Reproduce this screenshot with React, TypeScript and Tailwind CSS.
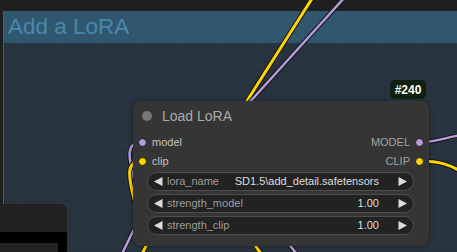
import type { ReactNode } from "react";

const FONT = "font-['Liberation_Sans',Arial,sans-serif]";

function Wire({ d, color, width = 3 }: { d: string; color: string; width?: number }) {
  return (
    <>
      <path d={d} stroke="#151515" strokeWidth={width + 2} fill="none" strokeLinecap="round" />
      <path d={d} stroke={color} strokeWidth={width} fill="none" strokeLinecap="round" />
    </>
  );
}

function Slot({ label, color, side }: { label: string; color: string; side: "in" | "out" }) {
  const dot = (
    <span
      className="block h-[9px] w-[9px] shrink-0 rounded-full border border-[#1a1a1a]"
      style={{ backgroundColor: color }}
    />
  );
  if (side === "in") {
    return (
      <div className="flex items-center">
        <span className="ml-[5px] block">{dot}</span>
        <span className="ml-[5px] text-[11px] text-[#c2c2c2]">{label}</span>
      </div>
    );
  }
  return (
    <div className="flex items-center">
      <span className="mr-[5px] text-[11px] text-[#a3a3a3]">{label}</span>
      <span className="mr-[5px] block">{dot}</span>
    </div>
  );
}

function Arrow({ dir }: { dir: "left" | "right" }) {
  return (
    <svg width="9" height="9" viewBox="0 0 9 9" className="shrink-0">
      {dir === "left" ? (
        <polygon points="8.5,0 8.5,9 0,4.5" fill="#dcdcdc" />
      ) : (
        <polygon points="0.5,0 0.5,9 9,4.5" fill="#dcdcdc" />
      )}
    </svg>
  );
}

function Widget({ label, value }: { label: string; value: ReactNode }) {
  return (
    <div className="ml-[14px] mr-[15px] flex h-[19px] items-center rounded-full border border-[#4d4d4d] bg-[#222222] px-[6px] text-[11px]">
      <Arrow dir="left" />
      <span className="ml-[4px] text-[#9e9e9e]">{label}</span>
      <span className="ml-auto text-[#dedede]">{value}</span>
      <span className="ml-[19px] block">
        <Arrow dir="right" />
      </span>
    </div>
  );
}

export default function App() {
  return (
    <div className={`relative h-[252px] w-[457px] overflow-hidden bg-[#1f1f1f] ${FONT}`}>
      {/* group */}
      <div className="absolute left-[3px] top-[11px] right-[-10px] bottom-[-10px] flex flex-col border-l border-[#3a6482] bg-[#28343f] bg-[linear-gradient(rgba(0,0,0,0.07)_1px,transparent_1px),linear-gradient(90deg,rgba(0,0,0,0.07)_1px,transparent_1px)] bg-[size:10px_10px]">
        <div className="flex h-[32px] items-center bg-[#31576f] pl-[4px] text-[22.5px] leading-none text-[#4a87ab]">
          Add a LoRA
        </div>
      </div>

      {/* links */}
      <svg className="absolute inset-0" width="457" height="252">
        <Wire d="M313,-3 L245,104" color="#ffd500" />
        <Wire d="M345,-3 L248,104" color="#b39ddb" width={2.5} />
        <Wire d="M142,142 C126,142 128,156 134,180 L136,225 L120,258" color="#b39ddb" width={2.5} />
        <Wire d="M142,161 C126,161 128,175 134,199 L150,238 L140,258" color="#ffd500" />
        <Wire d="M250,238 L264,258" color="#ffd500" />
        <Wire d="M284,238 L300,258" color="#b39ddb" width={2.5} />
        <Wire d="M420,142 C440,142 445,137 462,135" color="#b39ddb" width={2.5} />
        <Wire d="M420,161 C440,161 450,165 462,172" color="#ffd500" />
      </svg>

      {/* badge */}
      <div className="absolute left-[390px] top-[80px] flex h-[19px] w-[36px] items-center justify-center rounded-[5px] bg-[#10200f] text-[12px] font-bold text-white">
        #240
      </div>

      {/* node */}
      <div className="absolute left-[133px] top-[101px] h-[145px] w-[296px] rounded-[8px] bg-[#353535] shadow-[0_0_4px_rgba(0,0,0,0.4)]">
        <div className="flex h-[30px] items-center">
          <span className="ml-[9px] block h-[10px] w-[10px] rounded-full bg-[#777777]" />
          <span className="ml-[10px] text-[14px] text-[#a9a9a9]">Load LoRA</span>
        </div>
        <div className="mt-[2px] flex h-[19px] items-center justify-between">
          <Slot label="model" color="#b39ddb" side="in" />
          <Slot label="MODEL" color="#b39ddb" side="out" />
        </div>
        <div className="flex h-[19px] items-center justify-between">
          <Slot label="clip" color="#ffd500" side="in" />
          <Slot label="CLIP" color="#ffd500" side="out" />
        </div>
        <div className="mt-[1px] flex flex-col gap-[3px]">
          <Widget label="lora_name" value="SD1.5\add_detail.safetensors" />
          <Widget label="strength_model" value="1.00" />
          <Widget label="strength_clip" value="1.00" />
        </div>
      </div>

      {/* bottom-left panel */}
      <div className="absolute left-0 top-[204px] flex h-[48px] w-[67px] flex-col overflow-hidden rounded-tr-[6px] bg-[#222222]">
        <div className="h-[28px]" />
        <div className="h-[11px] bg-black" />
        <div className="flex flex-1">
          <div className="w-[58px] bg-[#232323]" />
          <div className="flex-1 bg-black" />
        </div>
      </div>
    </div>
  );
}
